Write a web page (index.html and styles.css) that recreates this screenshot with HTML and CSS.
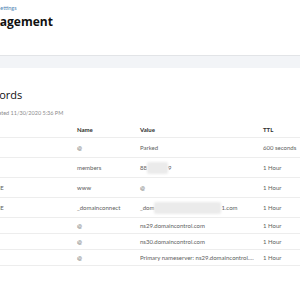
FILE: index.html
```html
<!DOCTYPE html>
<html lang="en">
<head>
    <meta charset="UTF-8">
    <title>DNS Management</title>
    <link rel="stylesheet" href="styles.css">
</head>
<body>
    <div class="page">
        <header class="page-header">
            <a class="breadcrumb" href="#">Domain Settings</a>
            <h1 class="page-title">DNS Management</h1>
        </header>

        <div class="band"></div>

        <section class="records">
            <h2 class="records-title">Records</h2>
            <p class="records-updated">Last updated 11/30/2020 5:36 PM</p>

            <div class="dns-table">
                <div class="dns-row dns-row--head">
                    <span>Type</span>
                    <span>Name</span>
                    <span>Value</span>
                    <span>TTL</span>
                </div>
                <div class="dns-row">
                    <span>A</span>
                    <span>@</span>
                    <span>Parked</span>
                    <span>600 seconds</span>
                </div>
                <div class="dns-row">
                    <span>A</span>
                    <span>members</span>
                    <span>88<i class="masked masked--short"></i>9</span>
                    <span>1 Hour</span>
                </div>
                <div class="dns-row">
                    <span>CNAME</span>
                    <span>www</span>
                    <span>@</span>
                    <span>1 Hour</span>
                </div>
                <div class="dns-row">
                    <span>CNAME</span>
                    <span>_domainconnect</span>
                    <span>_dom<i class="masked masked--long"></i>1.com</span>
                    <span>1 Hour</span>
                </div>
                <div class="dns-row dns-row--short">
                    <span>NS</span>
                    <span>@</span>
                    <span>ns29.domaincontrol.com</span>
                    <span>1 Hour</span>
                </div>
                <div class="dns-row dns-row--short">
                    <span>NS</span>
                    <span>@</span>
                    <span>ns30.domaincontrol.com</span>
                    <span>1 Hour</span>
                </div>
                <div class="dns-row dns-row--short">
                    <span>SOA</span>
                    <span>@</span>
                    <span class="truncate">Primary nameserver: ns29.domaincontrol.com.</span>
                    <span>1 Hour</span>
                </div>
            </div>
        </section>
    </div>
</body>
</html>
```

FILE: styles.css
```css
:root {
    --text-primary: #111111;
    --text-body: #606060;
    --text-muted: #8c8c8c;
    --link: #4f86b6;
    --line: #ededed;
    --band-bg: #f2f4f7;
    --band-line: #e2e4e7;
    --font-heading: 'Open Sans', 'Liberation Sans', sans-serif;
    --font-sans: Lato, 'Liberation Sans', sans-serif;
}

*, *::before, *::after {
    box-sizing: border-box;
    margin: 0;
    padding: 0;
}

html, body {
    overflow: hidden;
    background: #fff;
}

body {
    font-family: var(--font-sans);
    color: var(--text-primary);
}

/* the view is scrolled a little to the right */
.page {
    margin-left: -18px;
    width: 420px;
}

.page-header {
    padding-top: 4px;
}

.breadcrumb {
    display: block;
    margin-left: -5px;
    font-size: 5.5px;
    line-height: 8px;
    color: var(--link);
    text-decoration: none;
}

.page-title {
    margin-top: 2px;
    margin-left: -37px;
    font-family: var(--font-heading);
    font-size: 12px;
    line-height: 16px;
    font-weight: 700;
}

.band {
    margin-top: 25px;
    height: 13px;
    border-top: 1px solid var(--band-line);
    background: var(--band-bg);
}

.records {
    padding-top: 20px;
}

.records-title {
    margin-left: -1px;
    font-family: var(--font-heading);
    font-size: 11px;
    line-height: 14px;
    font-weight: 500;
}

.records-updated {
    margin-top: 7px;
    margin-left: -4px;
    font-size: 5.5px;
    line-height: 8px;
    color: var(--text-muted);
}

.dns-table {
    margin-top: 4px;
}

.dns-row {
    display: grid;
    grid-template-columns: 95px 63px 123px 1fr;
    align-items: center;
    height: 20px;
    border-bottom: 1px solid var(--line);
    font-size: 6px;
    color: var(--text-body);
}

.dns-row--head {
    height: 17px;
    color: #2e2e2e;
    font-weight: 700;
}

.dns-row--short {
    height: 16px;
}

.dns-row span {
    white-space: nowrap;
}

.truncate {
    display: block;
    max-width: 115px;
    overflow: hidden;
    text-overflow: ellipsis;
}

.masked {
    display: inline-block;
    vertical-align: middle;
    height: 12px;
    background: #ebebeb;
    border-radius: 2px;
    filter: blur(1px);
}

.masked--short {
    width: 21px;
}

.masked--long {
    width: 67px;
}
```
